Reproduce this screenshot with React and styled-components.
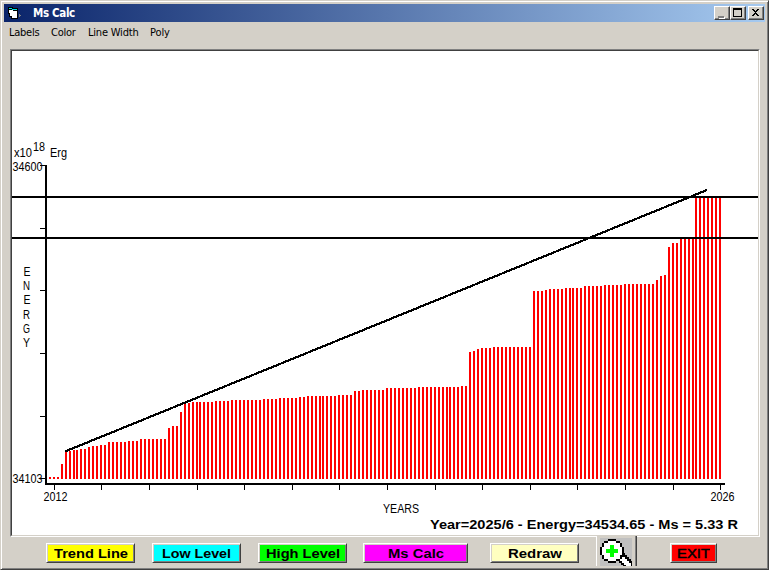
import React from "react";
import styled, { createGlobalStyle } from "styled-components";

const Global = createGlobalStyle`
  * { box-sizing: border-box; }
  body { margin: 0; background: #d4d0c8; overflow: hidden; }
`;

const Window = styled.div`
  width: 769px;
  height: 570px;
  display: flex;
  flex-direction: column;
  background: #d4d0c8;
  border: 1px solid;
  border-color: #d4d0c8 #404040 #404040 #d4d0c8;
  box-shadow: inset 1px 1px #fff, inset -1px -1px #808080;
  padding: 3px;
  color: #000;
`;

const TitleBar = styled.header`
  height: 18px;
  flex: none;
  display: flex;
  align-items: center;
  padding: 0 1px 0 4px;
  background: linear-gradient(90deg, #0a246a, #a6caf0);
  > svg { flex: none; }
`;

const Title = styled.h1`
  flex: 1;
  margin: 0 0 0 12px;
  color: #fff;
  font: bold 11.5px/18px "DejaVu Sans Condensed", "DejaVu Sans", sans-serif;
  letter-spacing: -0.35px;
`;

const Caption = styled.button`
  width: 16px;
  height: 14px;
  padding: 0;
  margin-left: ${(p) => (p.$apart ? 2 : 0)}px;
  display: block;
  border: 1px solid;
  border-color: #fff #404040 #404040 #fff;
  box-shadow: inset -1px -1px #808080;
  background: #d4d0c8;
  svg { display: block; }
`;

const MenuBar = styled.nav`
  height: 27px;
  flex: none;
  display: flex;
  gap: 12px;
  padding: 2px 0 0 5px;
`;

const MenuItem = styled.span`
  width: ${(p) => p.$w}px;
  font: 11px/18px "DejaVu Sans Condensed", "DejaVu Sans", sans-serif;
  letter-spacing: ${(p) => p.$track}px;
  white-space: nowrap;
`;

const Plot = styled.main`
  width: 750px;
  height: 488px;
  flex: none;
  margin-left: 6px;
  background: #fff;
  border: 1px solid;
  border-color: #808080 #fff #fff #808080;
  svg {
    display: block;
    border: 1px solid;
    border-color: #404040 #d4d0c8 #d4d0c8 #404040;
  }
`;

const Label = styled.text`
  font-family: "Liberation Sans", Arial, sans-serif;
  font-size: ${(p) => p.$size || 12}px;
  font-weight: ${(p) => (p.$bold ? 700 : 400)};
`;

const Footer = styled.footer`
  height: 30px;
  flex: none;
  display: flex;
  align-items: flex-start;
  padding-left: 42px;
`;

const Command = styled.button`
  width: ${(p) => p.$w}px;
  height: 20px;
  flex: none;
  margin: 6px ${(p) => p.$after}px 0 0;
  padding: 0;
  display: flex;
  justify-content: center;
  align-items: center;
  border: 1px solid;
  border-color: #fff #404040 #404040 #fff;
  box-shadow: inset 1px 1px #d4d0c8, inset -1px -1px #808080;
  background: ${(p) => p.$fill};
  color: #000;
`;

const ZoomButton = styled.button`
  width: 41px;
  height: 30px;
  flex: none;
  margin: -1px 33px 0 0;
  padding: 0 0 0 2px;
  border: 0;
  border-left: 1px solid #fff;
  border-right: 1px solid #404040;
  box-shadow: inset -1px 0 #808080;
  background: #d4d0c8;
  svg { display: block; }
`;

const FIRST = 49;
const BASE = 479;
const SHORT_STEPS = [6, 37, 68, 100, 131, 162];

// Each pair holds the x where a level starts and the top of its bars.
const LEVELS = [
  [49, 477], [61, 464], [65, 451], [73, 450], [80, 449], [88, 447], [92, 446],
  [100, 445], [108, 442], [128, 441], [140, 439], [168, 428], [172, 426],
  [180, 412], [184, 403], [192, 402], [215, 401], [231, 400], [263, 399],
  [279, 398], [299, 397], [307, 396], [338, 395], [354, 391], [362, 390],
  [386, 388], [418, 387], [461, 386], [469, 352], [473, 351], [477, 349],
  [481, 348], [493, 347], [533, 291], [545, 290], [549, 289], [565, 288],
  [584, 286], [604, 285], [624, 284], [656, 280], [660, 276], [664, 275],
  [668, 247], [672, 243], [680, 239], [695, 197],
];

const bars = [];
for (let i = 0, x = FIRST; i < 170; i++) {
  let top = BASE;
  for (const [start, y] of LEVELS) if (x >= start) top = y;
  bars.push({ x, top });
  x += SHORT_STEPS.includes(i) ? 3 : 4;
}

const yTicks = [165, 228, 290, 353, 416, 478];
const xTicks = Array.from({ length: 15 }, (_, i) => Math.floor(54.25 + i * 47.6));

const commands = [
  { name: "Trend Line", w: 89, after: 17, fill: "#ffff00", text: 74 },
  { name: "Low Level", w: 89, after: 17, fill: "#00ffff", text: 69 },
  { name: "High Level", w: 89, after: 16, fill: "#00ff00", text: 74 },
  { name: "Ms Calc", w: 105, after: 22, fill: "#ff00ff", text: 56 },
  { name: "Redraw", w: 89, after: 17, fill: "#ffffc0", text: 54 },
];

function Caps({ text, width, bold = true }) {
  return (
    <svg width={width} height="16">
      <Label y="13" $size={13.5} $bold={bold} textLength={width} lengthAdjust="spacingAndGlyphs"
        stroke={bold ? "none" : "#000"} strokeWidth="0.5">
        {text}
      </Label>
    </svg>
  );
}

function Chart() {
  return (
    <svg width="748" height="486" viewBox="12 51 746 484">
      <g shapeRendering="crispEdges">
        {bars.map((b) => (
          <rect key={b.x} x={b.x} y={b.top} width="2" height={BASE - b.top} fill="#ff0000" />
        ))}
        <rect x="45" y="165" width="2" height="320" />
        <rect x="45" y="483" width="680" height="2" />
        {yTicks.map((y) => <rect key={y} x="40" y={y} width="6" height="1" />)}
        {xTicks.map((x) => <rect key={x} x={x} y="484" width="1" height="6" />)}
        <rect x="12" y="196" width="746" height="2" />
        <rect x="12" y="237" width="746" height="2" />
        <path d="M65 451.5L707 190" stroke="#000" strokeWidth="2.2" />
      </g>
      <Label x="14" y="157" textLength="18" lengthAdjust="spacingAndGlyphs">x10</Label>
      <Label x="33" y="151" textLength="12" lengthAdjust="spacingAndGlyphs">18</Label>
      <Label x="50" y="157" textLength="17" lengthAdjust="spacingAndGlyphs">Erg</Label>
      <Label x="12.5" y="171" textLength="30" lengthAdjust="spacingAndGlyphs">34600</Label>
      <Label x="12.5" y="483" textLength="30" lengthAdjust="spacingAndGlyphs">34103</Label>
      {"ENERGY".split("").map((c, i) => (
        <Label key={i} x={c === "E" ? 23.5 : 23} y={276 + i * 14.2} textLength="7" lengthAdjust="spacingAndGlyphs">{c}</Label>
      ))}
      <Label x="43.5" y="501" textLength="24" lengthAdjust="spacingAndGlyphs">2012</Label>
      <Label x="710.5" y="501" textLength="24" lengthAdjust="spacingAndGlyphs">2026</Label>
      <Label x="383" y="513" textLength="36" lengthAdjust="spacingAndGlyphs">YEARS</Label>
      <Label x="430" y="529" $size={13.5} $bold textLength="308" lengthAdjust="spacingAndGlyphs">
        Year=2025/6 - Energy=34534.65 - Ms = 5.33 R
      </Label>
    </svg>
  );
}

function AppIcon() {
  return (
    <svg width="13" height="12" viewBox="0 0 13 12" shapeRendering="crispEdges">
      <path d="M0 0h5v1h5v11H3V10H1V7H0z" fill="#000" />
      <path d="M1 3h4v1h4v7H4V9H2V6H1z" fill="#fff" />
      <path d="M1 1h3v1h5v1H4V2H1z" fill="#00e0e0" />
      <path d="M11 7h1v1h1v1h-1v1h-1z" fill="#808080" />
    </svg>
  );
}

function Magnifier() {
  return (
    <svg width="33" height="30" viewBox="599 536 33 30">
      <rect x="600" y="538" width="32" height="28" fill="#c0c0c0" />
      <g shapeRendering="crispEdges">
        <path d="M617 557h2v2h2v2h2v2h2v2h2v2h-4v-2h-2v-2h-2v-2h-2zM621 553h4v2h2v2h2v2h2v2h2v6h-2v-4h-2v-2h-2v-2h-2v-2h-4z" fill="#000" />
        <path d="M619 557h6v2h2v2h2v2h2v4h-5v-2h-2v-2h-2v-2h-2v-2h-1z" fill="#fff" />
        <path d="M608 539h8v2h4v2h2v4h2v8h-2v4h-2v2h-4v2h-8v-2h-4v-2h-2v-4h-2v-8h2v-4h2v-2h4z" fill="#000" />
        <path d="M608 541h8v2h4v4h2v8h-2v4h-4v2h-8v-2h-4v-4h-2v-8h2v-4h4z" fill="#fff" />
        <path d="M610 545h4v4h4v4h-4v4h-4v-4h-4v-4h4z" fill="#00ff00" />
      </g>
    </svg>
  );
}

export default function App() {
  return (
    <Window>
      <Global />
      <TitleBar>
        <AppIcon />
        <Title>Ms Calc</Title>
        <Caption aria-label="Minimize">
          <svg width="13" height="11" shapeRendering="crispEdges">
            <path d="M4 9h6v2H4z" fill="#fff" />
            <path d="M3 8h6v2H3z" fill="#808080" />
          </svg>
        </Caption>
        <Caption aria-label="Maximize">
          <svg width="13" height="12" shapeRendering="crispEdges">
            <path d="M2 1h9v9H2zM3 3v6h7V3z" fillRule="evenodd" />
          </svg>
        </Caption>
        <Caption aria-label="Close" $apart>
          <svg width="13" height="12" shapeRendering="crispEdges">
            <path d="M3 2h2v1h1v1h1V3h1V2h2v1H9v1H8v1H7v1h1v1h1v1h1v1H8V8H7V7H6v1H5v1H3V8h1V7h1V6h1V5H5V4H4V3H3z" />
          </svg>
        </Caption>
      </TitleBar>
      <MenuBar>
        <MenuItem $w={30} $track={-0.25}>Labels</MenuItem>
        <MenuItem $w={25} $track={-0.25}>Color</MenuItem>
        <MenuItem $w={50} $track={-0.2}>Line Width</MenuItem>
        <MenuItem $w={22} $track={-0.1}>Poly</MenuItem>
      </MenuBar>
      <Plot><Chart /></Plot>
      <Footer>
        {commands.map((c) => (
          <Command key={c.name} $w={c.w} $after={c.after} $fill={c.fill}>
            <Caps text={c.name} width={c.text} />
          </Command>
        ))}
        <ZoomButton aria-label="Zoom in"><Magnifier /></ZoomButton>
        <Command $w={47} $after={0} $fill="#ff0000"><Caps text="EXIT" width={33} bold={false} /></Command>
      </Footer>
    </Window>
  );
}
